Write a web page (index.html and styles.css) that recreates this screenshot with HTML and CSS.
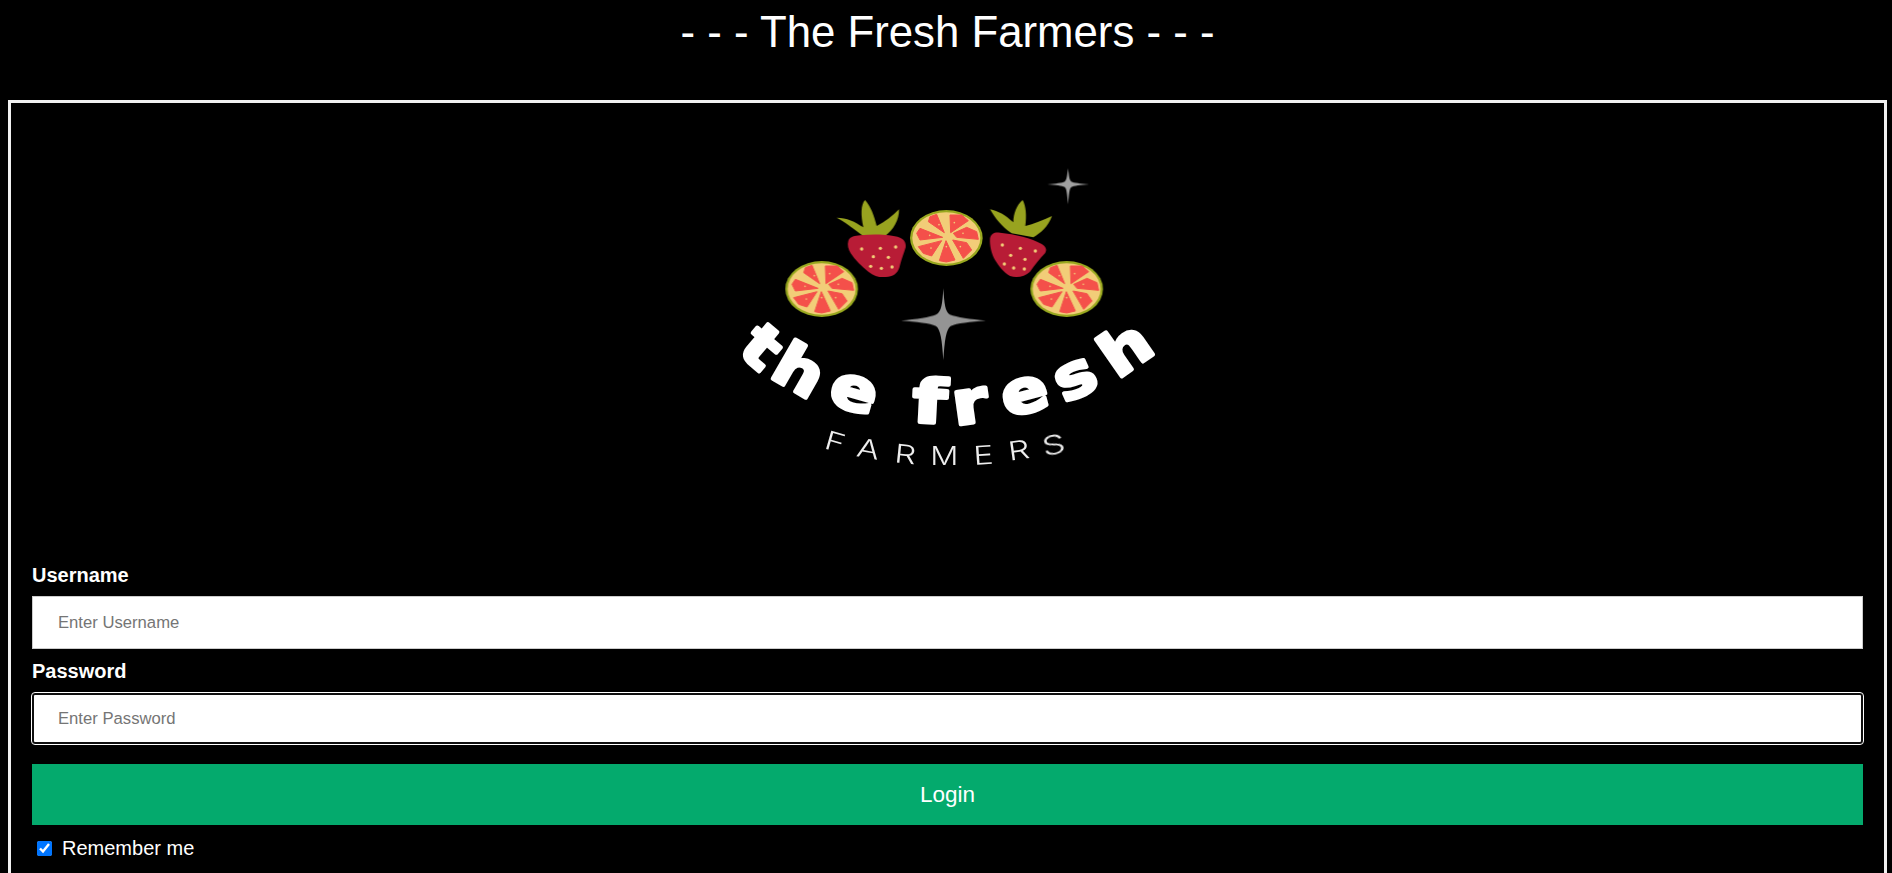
FILE: index.html
```html
<!DOCTYPE html>
<html lang="en">
<head>
<meta charset="utf-8">
<title>The Fresh Farmers</title>
<link rel="stylesheet" href="styles.css">
</head>
<body>
<h1 class="title">- - - The Fresh Farmers - - -</h1>
<form class="login-form">
  <svg class="logo" viewBox="697 103 501 462" width="501" height="462" role="img" aria-label="the fresh farmers logo">
    <defs>
      <g id="citrus">
        <ellipse class="rind" rx="109" ry="84"/>
        <ellipse class="pith" rx="102" ry="77"/>
        <g class="flesh">
          <polygon points="-6,-16 -54,-49 -49,-64 -29,-71"/>
          <polygon points="11,-69 46,-69 66,-52 13,-16"/>
          <polygon points="21,-14 61,-32 91,-19 96,4 31,-2"/>
          <polygon points="19,6 61,14 76,36 51,61"/>
          <polygon points="-1,8 26,66 0,72 -21,68"/>
          <polygon points="-14,8 -44,54 -69,46 -84,26"/>
          <polygon points="-11,-2 -79,6 -89,-14 -79,-29"/>
        </g>
        <g class="seed">
          <circle cx="-22" cy="-40" r="2.5"/><circle cx="24" cy="-46" r="2.5"/><circle cx="50" cy="-14" r="2.5"/>
          <circle cx="-50" cy="-8" r="2.5"/><circle cx="0" cy="26" r="2.5"/><circle cx="-46" cy="30" r="2.5"/><circle cx="42" cy="26" r="2.5"/>
        </g>
      </g>
    </defs>
    <g class="art" transform="translate(700 150) scale(.33333)">
      <path class="star" d="M1104 55C1107 78 1108 90 1114 95C1122 99 1140 101 1168 103C1140 105 1122 107 1114 111C1108 116 1107 130 1104 163C1101 130 1100 116 1094 111C1086 107 1068 105 1042 103C1068 101 1086 99 1094 95C1100 90 1101 78 1104 55Z"/>
      <use href="#citrus" x="365" y="417"/>
      <use href="#citrus" x="739" y="264"/>
      <use href="#citrus" x="1100" y="417"/>
      <path class="leaf" d="M410 203C440 203 465 215 490 232C482 195 482 165 495 150C512 170 522 195 530 228C555 215 578 198 597 178C598 210 580 240 555 258L490 258C465 240 435 215 410 203Z"/>
      <path class="berry" d="M445 272C450 260 465 257 480 256C520 252 570 252 600 263C612 268 619 278 617 292C612 310 605 325 600 345C596 365 585 378 565 380C545 383 525 382 505 365C485 350 465 330 452 310C445 298 441 285 445 272Z"/>
      <g class="seed">
        <circle cx="485" cy="297" r="5"/><circle cx="541" cy="295" r="5"/><circle cx="587" cy="291" r="5"/><circle cx="520" cy="320" r="5"/><circle cx="565" cy="322" r="5"/><circle cx="512" cy="349" r="5"/><circle cx="544" cy="355" r="5"/><circle cx="576" cy="351" r="5"/>
      </g>
      <path class="leaf" d="M870 178C895 183 915 195 940 217C940 190 950 165 968 150C978 170 980 195 976 228C1000 222 1030 210 1056 198C1045 230 1020 250 1000 262L935 250C905 230 885 205 870 178Z"/>
      <path class="berry" d="M870 265C873 250 885 245 900 248C945 252 995 265 1025 282C1038 290 1042 300 1035 310C1020 325 1005 345 990 365C975 380 950 385 930 378C910 368 895 345 885 330C875 315 868 285 870 265Z"/>
      <g class="seed">
        <circle cx="907" cy="285" r="5"/><circle cx="961" cy="295" r="5"/><circle cx="1006" cy="303" r="5"/><circle cx="932" cy="316" r="5"/><circle cx="975" cy="328" r="5"/><circle cx="913" cy="342" r="5"/><circle cx="941" cy="354" r="5"/><circle cx="973" cy="357" r="5"/>
      </g>
    </g>
    <g class="art" transform="translate(700 310) scale(.33333)">
      <path class="star big" d="M730 -65C733 -20 735 5 750 14C770 22 810 28 858 32C810 36 770 40 752 48C738 58 734 90 730 150C726 90 722 58 708 48C690 40 650 36 603 32C650 28 690 22 708 14C725 5 727 -20 730 -65Z"/>
      <g class="fresh">
        <text transform="translate(145 158) rotate(40) scale(1.15 1)">t</text>
        <text transform="translate(267 235) rotate(30) scale(1.15 1)">h</text>
        <text transform="translate(447 298) rotate(16) scale(1.15 1)">e</text>
        <text transform="translate(686 338) rotate(3) scale(1.3 1)">f</text>
        <text transform="translate(818 338) rotate(-8) scale(1.2 1)">r</text>
        <text transform="translate(988 305) rotate(-15) scale(1.15 1)">e</text>
        <text transform="translate(1148 255) rotate(-24) scale(1.15 1)">s</text>
        <text transform="translate(1312 167) rotate(-35) scale(1.15 1)">h</text>
      </g>
      <g class="farmers">
        <text transform="translate(398 422) rotate(16) scale(1.3 1)">F</text>
        <text transform="translate(500 444) rotate(10) scale(1.3 1)">A</text>
        <text transform="translate(613 460) rotate(6) scale(1.3 1)">R</text>
        <text transform="translate(733 466) scale(1.2 1)">M</text>
        <text transform="translate(852 463) rotate(-4) scale(1.3 1)">E</text>
        <text transform="translate(960 448) rotate(-8) scale(1.3 1)">R</text>
        <text transform="translate(1066 430) rotate(-12) scale(1.4 1)">S</text>
      </g>
    </g>
  </svg>
  <label class="field-label" for="username">Username</label>
  <input class="text-input" id="username" type="text" placeholder="Enter Username">
  <label class="field-label password-label" for="password">Password</label>
  <input class="text-input focused" id="password" type="password" placeholder="Enter Password">
  <button class="login-button" type="button">Login</button>
  <label class="remember"><input class="remember-box" type="checkbox" checked>Remember me</label>
</form>
</body>
</html>
```
FILE: styles.css
```css
html {
  overflow: hidden;
}
body {
  margin: 8px 5px 0 8px;
  background: #000;
  color: #fff;
  font-family: "Liberation Sans", Arial, sans-serif;
}
.title {
  margin: 0 0 44px;
  font-size: 43.75px;
  line-height: 48px;
  font-weight: 400;
  text-align: center;
}
.login-form {
  display: flex;
  flex-direction: column;
  border: 3px solid #f1f1f1;
  padding: 0 21px 60px;
}
.logo {
  display: block;
  align-self: center;
  flex: none;
}
.art {
  filter: blur(2px);
}
.rind { fill: #98a81f; }
.pith { fill: #f2cd78; }
.flesh polygon {
  fill: #f4504a;
  stroke: #f4504a;
  stroke-width: 3;
  stroke-linejoin: round;
}
.seed { fill: #f2cd78; }
.leaf { fill: #98a31f; }
.berry { fill: #b81c36; }
.star { fill: #a0a0a0; }
.star.big { fill: #949494; }
.fresh text {
  font-family: "DejaVu Sans", sans-serif;
  font-weight: 700;
  font-size: 180px;
  fill: #fff;
  stroke: #fff;
  stroke-width: 11;
  stroke-linejoin: round;
  text-anchor: middle;
}
.farmers text {
  font-family: "Inter", sans-serif;
  font-weight: 300;
  font-size: 78px;
  fill: #eee;
  text-anchor: middle;
}
.field-label {
  display: block;
  font-size: 20px;
  line-height: 21px;
  font-weight: 700;
}
.password-label {
  margin-top: 12px;
}
.text-input {
  display: block;
  box-sizing: border-box;
  width: 100%;
  height: 53px;
  margin-top: 10px;
  padding: 0 25px;
  border: 1px solid #ccc;
  border-radius: 0;
  background: #fff;
  font-family: inherit;
  font-size: 16.67px;
}
.text-input::placeholder {
  color: #757575;
}
.focused {
  height: 51px;
  margin-top: 11px;
  padding: 0 24px;
  border: 2px solid #101010;
  border-radius: 3px;
  outline: 1px solid #fff;
}
.login-button {
  display: block;
  width: 100%;
  height: 61px;
  margin-top: 20px;
  border: 0;
  background: #04aa6d;
  color: #fff;
  font-family: inherit;
  font-size: 22.5px;
}
.remember {
  display: flex;
  align-items: center;
  height: 23px;
  margin-top: 12px;
  font-size: 20px;
}
.remember-box {
  width: 15px;
  height: 15px;
  margin: 0 10px 0 5px;
}
```
